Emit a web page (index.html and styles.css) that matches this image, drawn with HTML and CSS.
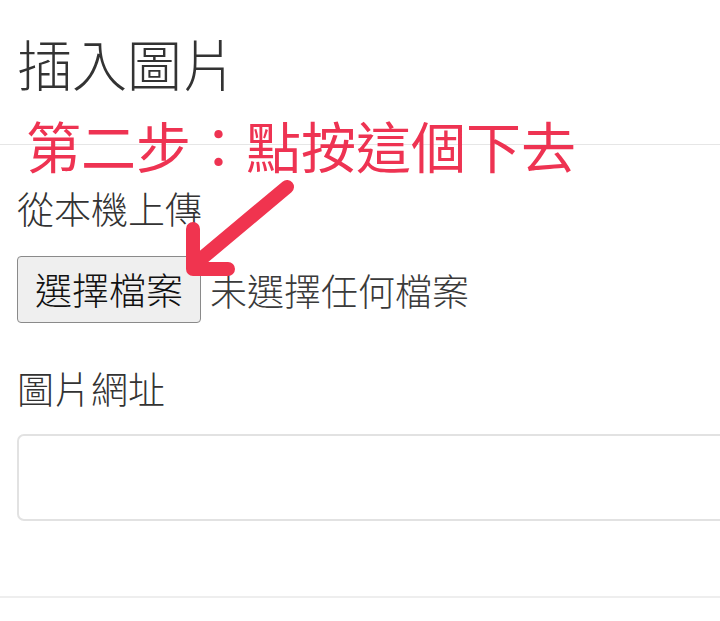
FILE: index.html
```html
<!DOCTYPE html>
<html lang="zh-Hant">
<head>
<meta charset="utf-8">
<link rel="stylesheet" href="styles.css">
</head>
<body>
<div class="modal">
  <div class="modal-header">
    <h4 class="modal-title">插入圖片</h4>
  </div>
  <div class="modal-body">
    <label class="field-label">從本機上傳</label>
    <div class="file-row">
      <button class="file-btn" type="button">選擇檔案</button>
      <span class="file-status">未選擇任何檔案</span>
    </div>
    <label class="field-label url-label">圖片網址</label>
    <input class="url-input" type="text">
  </div>
  <div class="modal-footer"></div>
  <div class="annotation">第二步：點按這個下去</div>
  <svg class="arrow" width="140" height="120" viewBox="0 0 140 120">
    <path d="M127 22 L35 99" fill="none" stroke="#f0344f" stroke-width="14" stroke-linecap="round"/>
    <path d="M33 64 L33 104 L68 104" fill="none" stroke="#f0344f" stroke-width="14" stroke-linecap="round" stroke-linejoin="round"/>
  </svg>
</div>
</body>
</html>
```
FILE: styles.css
```css
html, body {
  margin: 0;
  padding: 0;
  background: #ffffff;
  overflow: hidden;
}
body {
  font-family: "Noto Sans CJK TC", "Noto Sans", sans-serif;
  color: #333333;
}
.modal {
  position: relative;
  width: 720px;
  height: 621px;
}
.modal-header {
  padding: 30px 0 50px 17px;
  border-bottom: 1px solid #e6e6e6;
}
.modal-title {
  margin: 0;
  font-size: 55px;
  line-height: 64px;
  font-weight: 300;
  color: #333333;
}
.modal-body {
  padding: 39px 0 0 17px;
  display: flex;
  flex-direction: column;
  align-items: flex-start;
}
.field-label {
  font-size: 37px;
  line-height: 48px;
  font-weight: 300;
  color: #333333;
}
.file-row {
  display: flex;
  align-items: center;
  gap: 9px;
  margin-top: 24px;
}
.file-btn {
  font-family: inherit;
  font-size: 37px;
  line-height: 48px;
  font-weight: 300;
  padding: 8px 17px 9px;
  background: #efefef;
  border: 1px solid #8a8a8a;
  border-radius: 4px;
  color: #111111;
}
.file-status {
  font-size: 37px;
  line-height: 48px;
  font-weight: 300;
  color: #3a3a3a;
}
.url-label {
  margin-top: 41px;
}
.url-input {
  margin-top: 22px;
  width: 760px;
  height: 87px;
  box-sizing: border-box;
  border: 2px solid #e2e2e2;
  border-radius: 7px;
  font-size: 36px;
  padding: 0 16px;
}
.modal-footer {
  margin-top: 75px;
  border-top: 2px solid #eeeeee;
}
.annotation {
  position: absolute;
  left: 26px;
  top: 117px;
  font-size: 55px;
  line-height: 55px;
  font-weight: 400;
  color: #ee3352;
  white-space: nowrap;
}
.arrow {
  position: absolute;
  left: 160px;
  top: 165px;
}
```
